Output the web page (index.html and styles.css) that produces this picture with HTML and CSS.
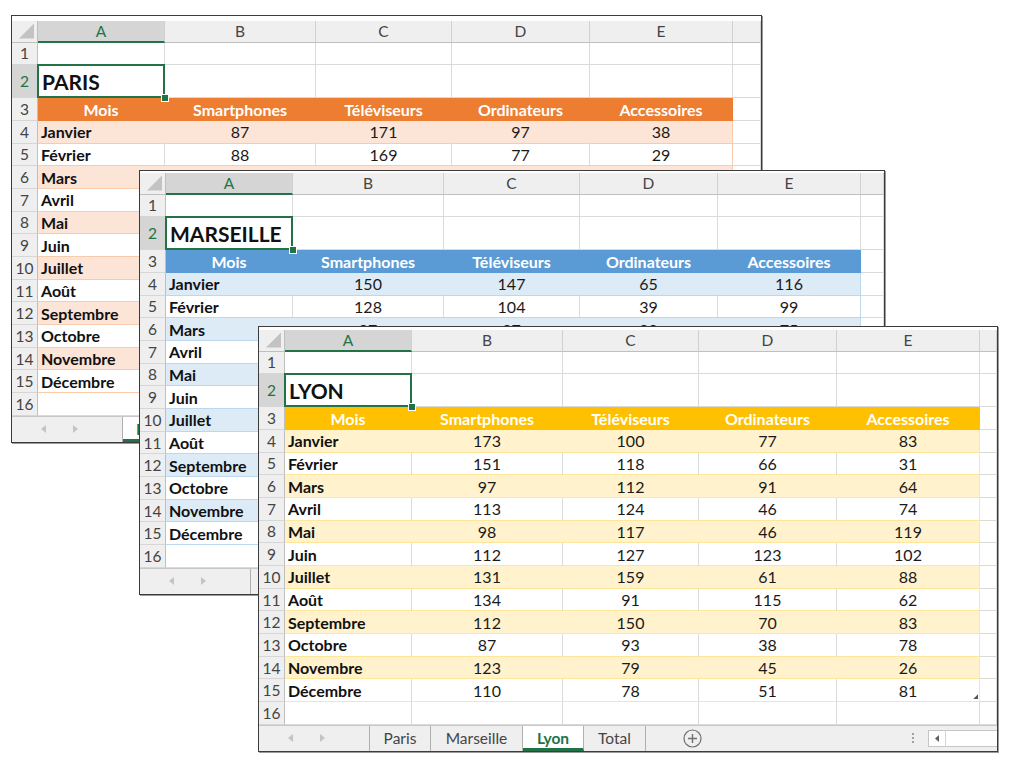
FILE: index.html
```html
<!DOCTYPE html>
<html lang="fr">
<head>
<meta charset="utf-8">
<title>Ventes par ville</title>
<link rel="stylesheet" href="styles.css">
</head>
<body>

<div class="win paris">
  <div class="sheet">
    <div class="row hdr"><span class="corner"><i class="tri"></i></span><span class="sel">A</span><span>B</span><span>C</span><span>D</span><span>E</span><span></span></div>
    <div class="row"><span class="rn">1</span><span></span><span></span><span></span><span></span><span></span><span></span></div>
    <div class="row r2"><span class="rn sel">2</span><span class="title">PARIS<i class="handle"></i></span><span></span><span></span><span></span><span></span><span></span></div>
    <div class="row th"><span class="rn">3</span><span class="t">Mois</span><span class="t">Smartphones</span><span class="t">Téléviseurs</span><span class="t">Ordinateurs</span><span class="t e">Accessoires</span><span></span></div>
    <div class="row tr band"><span class="rn">4</span><span class="t m">Janvier</span><span class="t">87</span><span class="t">171</span><span class="t">97</span><span class="t e">38</span><span></span></div>
    <div class="row tr"><span class="rn">5</span><span class="t m">Février</span><span class="t">88</span><span class="t">169</span><span class="t">77</span><span class="t e">29</span><span></span></div>
    <div class="row tr band"><span class="rn">6</span><span class="t m">Mars</span><span class="t"></span><span class="t"></span><span class="t"></span><span class="t e"></span><span></span></div>
    <div class="row tr"><span class="rn">7</span><span class="t m">Avril</span><span class="t"></span><span class="t"></span><span class="t"></span><span class="t e"></span><span></span></div>
    <div class="row tr band"><span class="rn">8</span><span class="t m">Mai</span><span class="t"></span><span class="t"></span><span class="t"></span><span class="t e"></span><span></span></div>
    <div class="row tr"><span class="rn">9</span><span class="t m">Juin</span><span class="t"></span><span class="t"></span><span class="t"></span><span class="t e"></span><span></span></div>
    <div class="row tr band"><span class="rn">10</span><span class="t m">Juillet</span><span class="t"></span><span class="t"></span><span class="t"></span><span class="t e"></span><span></span></div>
    <div class="row tr"><span class="rn">11</span><span class="t m">Août</span><span class="t"></span><span class="t"></span><span class="t"></span><span class="t e"></span><span></span></div>
    <div class="row tr band"><span class="rn">12</span><span class="t m">Septembre</span><span class="t"></span><span class="t"></span><span class="t"></span><span class="t e"></span><span></span></div>
    <div class="row tr"><span class="rn">13</span><span class="t m">Octobre</span><span class="t"></span><span class="t"></span><span class="t"></span><span class="t e"></span><span></span></div>
    <div class="row tr band"><span class="rn">14</span><span class="t m">Novembre</span><span class="t"></span><span class="t"></span><span class="t"></span><span class="t e"></span><span></span></div>
    <div class="row tr"><span class="rn">15</span><span class="t m">Décembre</span><span class="t"></span><span class="t"></span><span class="t"></span><span class="t e"></span><span></span></div>
    <div class="row"><span class="rn">16</span><span></span><span></span><span></span><span></span><span></span><span></span></div>
  </div>
  <div class="tabs">
    <span class="nav"><svg width="5" height="8" viewBox="0 0 5 8"><path d="M5 0L0 4L5 8Z"/></svg><svg width="5" height="8" viewBox="0 0 5 8"><path d="M0 0L5 4L0 8Z"/></svg></span>
    <span class="tab w61 on">Paris</span><span class="tab w92">Marseille</span><span class="tab w61">Lyon</span><span class="tab w62">Total</span>
    <span class="add"><svg width="19" height="19" viewBox="0 0 19 19"><circle cx="9.5" cy="9.5" r="8.5"/><path d="M9.5 5v9M5 9.5h9"/></svg></span>
    <span class="spacer"></span>
    <span class="dots"><i></i><i></i><i></i></span>
    <span class="hscroll"><span class="sarrow"><svg width="4" height="7" viewBox="0 0 4 7"><path d="M4 0L0 3.5L4 7Z"/></svg></span></span>
  </div>
</div>

<div class="win marseille">
  <div class="sheet">
    <div class="row hdr"><span class="corner"><i class="tri"></i></span><span class="sel">A</span><span>B</span><span>C</span><span>D</span><span>E</span><span></span></div>
    <div class="row"><span class="rn">1</span><span></span><span></span><span></span><span></span><span></span><span></span></div>
    <div class="row r2"><span class="rn sel">2</span><span class="title">MARSEILLE<i class="handle"></i></span><span></span><span></span><span></span><span></span><span></span></div>
    <div class="row th"><span class="rn">3</span><span class="t">Mois</span><span class="t">Smartphones</span><span class="t">Téléviseurs</span><span class="t">Ordinateurs</span><span class="t e">Accessoires</span><span></span></div>
    <div class="row tr band"><span class="rn">4</span><span class="t m">Janvier</span><span class="t">150</span><span class="t">147</span><span class="t">65</span><span class="t e">116</span><span></span></div>
    <div class="row tr"><span class="rn">5</span><span class="t m">Février</span><span class="t">128</span><span class="t">104</span><span class="t">39</span><span class="t e">99</span><span></span></div>
    <div class="row tr band"><span class="rn">6</span><span class="t m">Mars</span><span class="t">97</span><span class="t">87</span><span class="t">90</span><span class="t e">75</span><span></span></div>
    <div class="row tr"><span class="rn">7</span><span class="t m">Avril</span><span class="t"></span><span class="t"></span><span class="t"></span><span class="t e"></span><span></span></div>
    <div class="row tr band"><span class="rn">8</span><span class="t m">Mai</span><span class="t"></span><span class="t"></span><span class="t"></span><span class="t e"></span><span></span></div>
    <div class="row tr"><span class="rn">9</span><span class="t m">Juin</span><span class="t"></span><span class="t"></span><span class="t"></span><span class="t e"></span><span></span></div>
    <div class="row tr band"><span class="rn">10</span><span class="t m">Juillet</span><span class="t"></span><span class="t"></span><span class="t"></span><span class="t e"></span><span></span></div>
    <div class="row tr"><span class="rn">11</span><span class="t m">Août</span><span class="t"></span><span class="t"></span><span class="t"></span><span class="t e"></span><span></span></div>
    <div class="row tr band"><span class="rn">12</span><span class="t m">Septembre</span><span class="t"></span><span class="t"></span><span class="t"></span><span class="t e"></span><span></span></div>
    <div class="row tr"><span class="rn">13</span><span class="t m">Octobre</span><span class="t"></span><span class="t"></span><span class="t"></span><span class="t e"></span><span></span></div>
    <div class="row tr band"><span class="rn">14</span><span class="t m">Novembre</span><span class="t"></span><span class="t"></span><span class="t"></span><span class="t e"></span><span></span></div>
    <div class="row tr"><span class="rn">15</span><span class="t m">Décembre</span><span class="t"></span><span class="t"></span><span class="t"></span><span class="t e"></span><span></span></div>
    <div class="row"><span class="rn">16</span><span></span><span></span><span></span><span></span><span></span><span></span></div>
  </div>
  <div class="tabs">
    <span class="nav"><svg width="5" height="8" viewBox="0 0 5 8"><path d="M5 0L0 4L5 8Z"/></svg><svg width="5" height="8" viewBox="0 0 5 8"><path d="M0 0L5 4L0 8Z"/></svg></span>
    <span class="tab w61">Paris</span><span class="tab w92 on">Marseille</span><span class="tab w61">Lyon</span><span class="tab w62">Total</span>
    <span class="add"><svg width="19" height="19" viewBox="0 0 19 19"><circle cx="9.5" cy="9.5" r="8.5"/><path d="M9.5 5v9M5 9.5h9"/></svg></span>
    <span class="spacer"></span>
    <span class="dots"><i></i><i></i><i></i></span>
    <span class="hscroll"><span class="sarrow"><svg width="4" height="7" viewBox="0 0 4 7"><path d="M4 0L0 3.5L4 7Z"/></svg></span></span>
  </div>
</div>

<div class="win lyon">
  <div class="sheet">
    <div class="row hdr"><span class="corner"><i class="tri"></i></span><span class="sel">A</span><span>B</span><span>C</span><span>D</span><span>E</span><span></span></div>
    <div class="row"><span class="rn">1</span><span></span><span></span><span></span><span></span><span></span><span></span></div>
    <div class="row r2"><span class="rn sel">2</span><span class="title">LYON<i class="handle"></i></span><span></span><span></span><span></span><span></span><span></span></div>
    <div class="row th"><span class="rn">3</span><span class="t">Mois</span><span class="t">Smartphones</span><span class="t">Téléviseurs</span><span class="t">Ordinateurs</span><span class="t e">Accessoires</span><span></span></div>
    <div class="row tr band"><span class="rn">4</span><span class="t m">Janvier</span><span class="t">173</span><span class="t">100</span><span class="t">77</span><span class="t e">83</span><span></span></div>
    <div class="row tr"><span class="rn">5</span><span class="t m">Février</span><span class="t">151</span><span class="t">118</span><span class="t">66</span><span class="t e">31</span><span></span></div>
    <div class="row tr band"><span class="rn">6</span><span class="t m">Mars</span><span class="t">97</span><span class="t">112</span><span class="t">91</span><span class="t e">64</span><span></span></div>
    <div class="row tr"><span class="rn">7</span><span class="t m">Avril</span><span class="t">113</span><span class="t">124</span><span class="t">46</span><span class="t e">74</span><span></span></div>
    <div class="row tr band"><span class="rn">8</span><span class="t m">Mai</span><span class="t">98</span><span class="t">117</span><span class="t">46</span><span class="t e">119</span><span></span></div>
    <div class="row tr"><span class="rn">9</span><span class="t m">Juin</span><span class="t">112</span><span class="t">127</span><span class="t">123</span><span class="t e">102</span><span></span></div>
    <div class="row tr band"><span class="rn">10</span><span class="t m">Juillet</span><span class="t">131</span><span class="t">159</span><span class="t">61</span><span class="t e">88</span><span></span></div>
    <div class="row tr"><span class="rn">11</span><span class="t m">Août</span><span class="t">134</span><span class="t">91</span><span class="t">115</span><span class="t e">62</span><span></span></div>
    <div class="row tr band"><span class="rn">12</span><span class="t m">Septembre</span><span class="t">112</span><span class="t">150</span><span class="t">70</span><span class="t e">83</span><span></span></div>
    <div class="row tr"><span class="rn">13</span><span class="t m">Octobre</span><span class="t">87</span><span class="t">93</span><span class="t">38</span><span class="t e">78</span><span></span></div>
    <div class="row tr band"><span class="rn">14</span><span class="t m">Novembre</span><span class="t">123</span><span class="t">79</span><span class="t">45</span><span class="t e">26</span><span></span></div>
    <div class="row tr"><span class="rn">15</span><span class="t m">Décembre</span><span class="t">110</span><span class="t">78</span><span class="t">51</span><span class="t e grip">81</span><span></span></div>
    <div class="row"><span class="rn">16</span><span></span><span></span><span></span><span></span><span></span><span></span></div>
  </div>
  <div class="tabs">
    <span class="nav"><svg width="5" height="8" viewBox="0 0 5 8"><path d="M5 0L0 4L5 8Z"/></svg><svg width="5" height="8" viewBox="0 0 5 8"><path d="M0 0L5 4L0 8Z"/></svg></span>
    <span class="tab w61">Paris</span><span class="tab w92">Marseille</span><span class="tab w61 on">Lyon</span><span class="tab w62">Total</span>
    <span class="add"><svg width="19" height="19" viewBox="0 0 19 19"><circle cx="9.5" cy="9.5" r="8.5"/><path d="M9.5 5v9M5 9.5h9"/></svg></span>
    <span class="spacer"></span>
    <span class="dots"><i></i><i></i><i></i></span>
    <span class="hscroll"><span class="sarrow"><svg width="4" height="7" viewBox="0 0 4 7"><path d="M4 0L0 3.5L4 7Z"/></svg></span></span>
  </div>
</div>

</body>
</html>
```

FILE: styles.css
```css
* { box-sizing: border-box; margin: 0; padding: 0; }
html, body { background: #fff; }
body {
  margin: 0;
  width: 1024px;
  height: 772px;
  position: relative;
  overflow: hidden;
  font-family: Lato, "Open Sans", "Liberation Sans", sans-serif;
  color: #1a1a1a;
}

/* windows on the desktop */
.win {
  position: absolute;
  background: #fff;
  border: 1px solid #3c3c3c;
  box-shadow: 1px 1px 0 #9a9a9a;
  overflow: hidden;
}
.paris { left: 11px; top: 15px; width: 751px; padding-top: 5px;
  --h: #ED7D31; --b: #FCE4D6; --l: #F8CBAD; }
.marseille { left: 139px; top: 170px; width: 746px; padding-top: 2px;
  --h: #5B9BD5; --b: #DDEBF7; --l: #BDD7EE; }
.lyon { left: 258px; top: 326px; width: 740px; padding-top: 3px;
  --h: #FFC000; --b: #FFF2CC; --l: #FFE699; }

/* grid rows */
.row {
  display: grid;
  grid-template-columns: 26px 127px 151px 136px 138px 143px 1fr;
  height: 22.7px;
}
.row > span {
  display: flex;
  align-items: center;
  justify-content: center;
  border-right: 1px solid #dadada;
  border-bottom: 1px solid #dadada;
  font-size: 16px;
  white-space: nowrap;
  overflow: hidden;
  color: #1a1a1a;
}

/* column headers */
.row.hdr { height: 21.5px; }
.row.hdr > span {
  background: #efefef;
  color: #444;
  border-right-color: #d0d0d0;
  border-bottom-color: #bfbfbf;
  font-size: 15.5px;
}
.row.hdr > span.sel {
  background: #d5d5d5;
  color: #217346;
  border-bottom: 2px solid #217346;
}
.row > span.corner {
  justify-content: flex-end;
  align-items: flex-end;
  border-right-color: #bfbfbf;
}
.tri {
  display: block;
  width: 15px;
  height: 15px;
  margin: 0 3px 3px 0;
  background: #c3c3c3;
  clip-path: polygon(100% 0, 100% 100%, 0 100%);
}

/* row numbers */
.row > span.rn {
  background: #efefef;
  color: #444;
  font-size: 15.5px;
  border-right-color: #bfbfbf;
  border-bottom-color: #d6d6d6;
}
.row > span.rn.sel { background: #d5d5d5; color: #217346; }

/* title cell */
.row.r2 { height: 33px; }
.row > span.title {
  justify-content: flex-start;
  align-items: flex-end;
  padding: 0 0 3px 4px;
  font-size: 21px;
  font-weight: 700;
  color: #111;
  position: relative;
  overflow: visible;
  z-index: 1;
}
.title::after {
  content: "";
  position: absolute;
  left: -1px; top: -1px; right: -1px; bottom: -1px;
  border: 2px solid #217346;
}
.handle {
  position: absolute;
  right: -5px;
  bottom: -5px;
  width: 8px;
  height: 8px;
  background: #217346;
  border: 1px solid #fff;
  z-index: 2;
}

/* table */
.row > span.t { border-bottom-color: var(--l); }
.row.th > span.t {
  background: var(--h);
  color: #fff;
  font-weight: 700;
  border-right-color: var(--h);
  border-bottom-color: var(--h);
}
.row.band > span.t { background: var(--b); border-right-color: var(--b); }
.row.tr > span.t.e { border-right-color: var(--l); }
.row > span.t.m {
  justify-content: flex-start;
  padding-left: 3px;
  font-weight: 700;
  color: #111;
}
.row > span.grip { position: relative; }
.grip::after {
  content: "";
  position: absolute;
  right: 1px;
  bottom: 2px;
  width: 5px;
  height: 5px;
  background: #555;
  clip-path: polygon(100% 0, 100% 100%, 0 100%);
}

/* sheet tabs */
.tabs {
  display: flex;
  height: 26px;
  background: #efefef;
  border-top: 1px solid #c8c8c8;
  font-size: 15.5px;
  color: #444;
}
.nav {
  width: 111px;
  flex: none;
  display: flex;
  align-items: center;
  gap: 27px;
  padding-left: 29px;
  border-right: 1px solid #b0b0b0;
}
.nav svg path { fill: #c4c4c4; }
.tab {
  flex: none;
  display: flex;
  align-items: center;
  justify-content: center;
  border-right: 1px solid #b0b0b0;
}
.w61 { width: 61px; }
.w62 { width: 62px; }
.w92 { width: 92px; }
.tab.on {
  background: #fff;
  color: #217346;
  font-weight: 700;
  border-bottom: 3px solid #217346;
  padding-top: 3px;
}
.add {
  flex: none;
  display: flex;
  align-items: center;
  margin-left: 37px;
}
.add circle { fill: none; stroke: #707070; stroke-width: 1.2; }
.add path { stroke: #707070; stroke-width: 1.4; }
.spacer { flex: 1; }
.dots {
  flex: none;
  display: flex;
  flex-direction: column;
  justify-content: center;
  gap: 2px;
  width: 6px;
  margin-right: 12px;
}
.dots i { display: block; width: 2px; height: 2px; background: #a0a0a0; margin-left: 2px; }
.hscroll {
  flex: none;
  width: 69px;
  align-self: center;
  height: 17px;
  background: #fff;
  border: 1px solid #c6c6c6;
  border-right: none;
  display: flex;
}
.sarrow {
  width: 17px;
  display: flex;
  align-items: center;
  justify-content: center;
  border-right: 1px solid #d6d6d6;
}
.sarrow path { fill: #606060; }
```
